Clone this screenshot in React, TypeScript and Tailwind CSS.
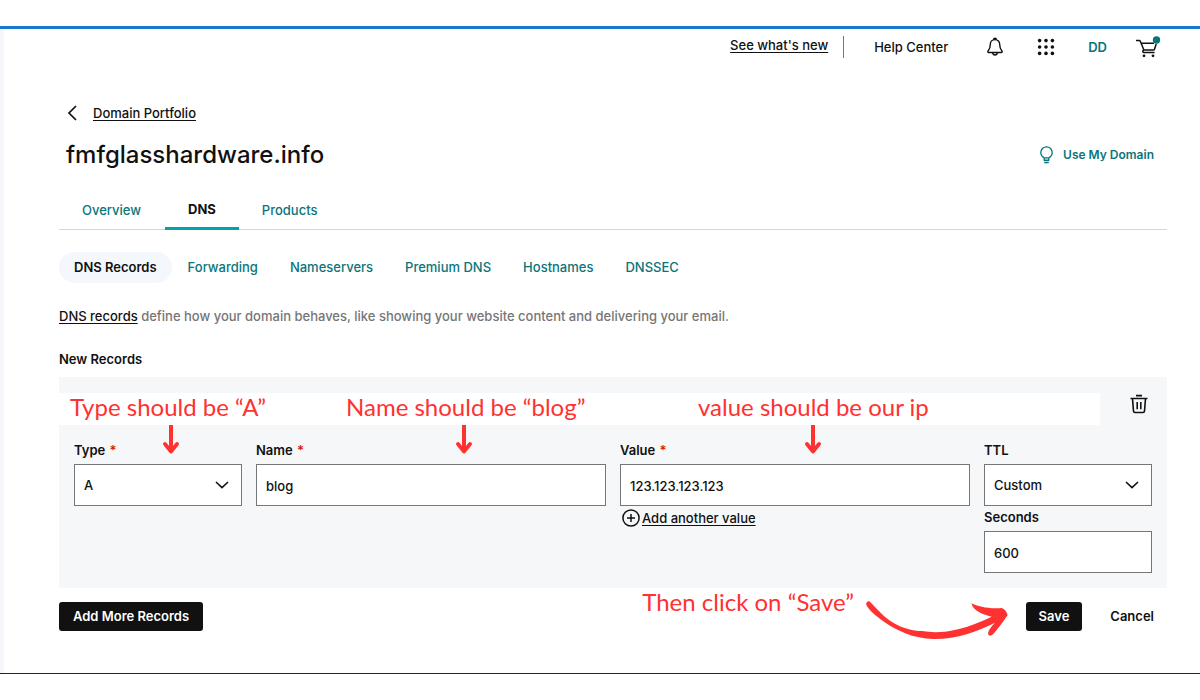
import type { ReactNode } from "react";

const subTabs = ["Forwarding", "Nameservers", "Premium DNS", "Hostnames", "DNSSEC"];

function Label({ htmlFor, required, children }: { htmlFor: string; required?: boolean; children: ReactNode }) {
  return (
    <label htmlFor={htmlFor} className="mb-1 block text-[13px] leading-5 font-semibold">
      {children}
      {required && <span className="ml-px font-semibold text-[#db1802]"> *</span>}
    </label>
  );
}

function TextField({ id, value }: { id: string; value: string }) {
  return (
    <input
      id={id}
      defaultValue={value}
      className="block h-[42px] w-full border border-[#767676] bg-white px-[9px] pt-[2px] text-[13px] font-medium"
    />
  );
}

function SelectField({ id, options }: { id: string; options: string[] }) {
  return (
    <div className="relative">
      <select
        id={id}
        className="block h-[42px] w-full appearance-none border border-[#767676] bg-white px-[9px] pt-[2px] text-[13px] font-medium"
      >
        {options.map((o) => (
          <option key={o}>{o}</option>
        ))}
      </select>
      <svg
        viewBox="0 0 14 8"
        className="pointer-events-none absolute top-[17px] right-[13px] h-2 w-3.5"
        fill="none"
        stroke="#111"
        strokeWidth="1.6"
      >
        <path d="M1 1l6 5.6L13 1" />
      </svg>
    </div>
  );
}

function DownArrow({ className }: { className: string }) {
  return (
    <svg
      viewBox="0 0 16 30"
      className={`absolute top-12 h-[30px] w-4 ${className}`}
      fill="none"
      stroke="#ff3131"
      strokeWidth="4"
      strokeLinejoin="round"
    >
      <path d="M8 0v26" />
      <path d="M2 19l6 7.500 6-7.500" strokeLinecap="round" strokeWidth="3.8" />
    </svg>
  );
}

function Note({ className, children }: { className?: string; children: ReactNode }) {
  return (
    <span className={`font-['Lato',sans-serif] text-2xl leading-8 whitespace-nowrap text-[#ff3131] ${className ?? ""}`}>
      {children}
    </span>
  );
}

function BellIcon() {
  return (
    <svg viewBox="0 0 16 20" className="h-5 w-4" fill="none" stroke="#111" strokeWidth="1.4" strokeLinejoin="round">
      <path d="M8 2.600c-2.900 0-4.700 2.200-4.700 4.800 0 3.600-.6 4.700-2.200 6.600-.5.700-.2 1.500.6 1.500h12.600c.8 0 1.100-.8.6-1.500-1.600-1.900-2.200-3-2.200-6.600 0-2.600-1.800-4.800-4.700-4.800z" />
      <path d="M6.600 2.700c0-2 2.800-2 2.800 0M5.600 15.700c.5 3 4.300 3 4.800 0" />
    </svg>
  );
}

function GridIcon() {
  return (
    <svg viewBox="0 0 18 18" className="h-[18px] w-[18px]" fill="#111">
      {[2.6, 9, 15.4].map((y) => [2.6, 9, 15.4].map((x) => <circle key={`${x}-${y}`} cx={x} cy={y} r="1.8" />))}
    </svg>
  );
}

function CartIcon() {
  return (
    <svg viewBox="0 0 25 22" className="h-[22px] w-[25px]" fill="none" stroke="#111" strokeWidth="1.5">
      <path d="M0 4.500h3.200c.6 0 .9.300 1.100.8l3.200 7.700c.3.800.7 1.100 1.400 1.100h8.300c.8 0 1.200-.4 1.400-1.100l1.600-5" />
      <path d="M5 7.200h13M8 13.700c-1.600.7-1.800 2.900.4 2.900h10.200" />
      <circle cx="8" cy="19.800" r="1.400" fill="#111" stroke="none" />
      <circle cx="17" cy="19.800" r="1.400" fill="#111" stroke="none" />
      <circle cx="20.500" cy="4" r="3.700" fill="#09757a" stroke="none" />
    </svg>
  );
}

function TrashIcon() {
  return (
    <svg viewBox="0 0 18 20" className="h-5 w-[18px]" fill="none" stroke="#111" strokeWidth="1.6">
      <path d="M6 1.600h6M.5 4.500h17M2.500 4.500l1 12.700c.1.900.7 1.300 1.400 1.300h8.200c.7 0 1.300-.4 1.400-1.300l1-12.700" />
      <path d="M7.200 8v7.200M10.800 8v7.200" />
    </svg>
  );
}

export default function App() {
  return (
    <div className="bg-white pt-[26px] font-['Inter',sans-serif] text-[#111]">
      <div className="flex border-t-3 border-b border-t-[#1976d2] border-b-[#26261f]">
        <div className="w-1 shrink-0 bg-[#f5f7fa]" />
        <div className="min-w-0 flex-1 pr-[33px] pb-[42px] pl-[55px]">
          <header className="flex h-9 items-center justify-end pr-[6px] text-[13px] font-medium">
            <a href="#new" className="mb-[2px] underline underline-offset-2">
              See what's new
            </a>
            <span className="ml-[15px] h-[22px] w-px bg-[#767676]" />
            <a href="#help" className="ml-[30px] pt-[2px]">
              Help Center
            </a>
            <button aria-label="Notifications" className="ml-[39px]">
              <BellIcon />
            </button>
            <button aria-label="Apps" className="ml-[34px]">
              <GridIcon />
            </button>
            <button className="ml-[33px] pt-[2px] font-semibold text-[#09757a]">DD</button>
            <button aria-label="Cart" className="ml-[29px]">
              <CartIcon />
            </button>
          </header>

          <nav aria-label="Breadcrumb" className="mt-[38px] flex items-center pl-2 text-[13px] leading-5 font-medium">
            <svg viewBox="0 0 10 16" className="h-4 w-2.5" fill="none" stroke="#111" strokeWidth="1.7">
              <path d="M9 1L2 8l7 7" />
            </svg>
            <a href="#portfolio" className="ml-4 underline underline-offset-2">
              Domain Portfolio
            </a>
          </nav>

          <div className="mt-4 flex items-center justify-between pr-[13px] pl-[7px]">
            <h1 className="text-2xl leading-8 font-medium">fmfglasshardware.info</h1>
            <a href="#use" className="flex items-center gap-[10px] text-[12px] font-semibold text-[#09757a]">
              <svg viewBox="0 0 13 18" className="h-[18px] w-[13px]" fill="none" stroke="#09757a" strokeWidth="1.3">
                <path d="M4.200 11.800C2.200 10.800.8 9 .8 6.600a5.700 5.700 0 0111.400 0c0 2.400-1.400 4.200-3.400 5.200v2.400H4.200zM4 14.300h5M4.200 16.500h4.600M4.200 11.900h4.600" />
              </svg>
              Use My Domain
            </a>
          </div>

          <nav className="mt-[19px] flex h-10 border-b border-[#d6d6d6] pl-[23px] text-[13px] font-medium">
            <a href="#overview" className="flex items-center pt-[2px] text-[#09757a]">
              Overview
            </a>
            <a
              href="#dns"
              className="-mb-px ml-6 flex items-center border-b-3 border-[#00a4a6] px-[23px] pt-[2px] font-bold"
            >
              DNS
            </a>
            <a href="#products" className="ml-[23px] flex items-center pt-[2px] text-[#09757a]">
              Products
            </a>
          </nav>

          <nav className="mt-[22px] flex items-center gap-8 text-[13px] leading-[31px] font-medium text-[#09757a]">
            <a href="#records" className="-mr-4 rounded-full bg-[#f4f8fc] px-[15px] font-semibold text-[#111]">
              DNS Records
            </a>
            {subTabs.map((t) => (
              <a key={t} href="#tab">
                {t}
              </a>
            ))}
          </nav>

          <p className="mt-[23px] text-[13px] leading-5 font-medium text-[#767676]">
            <a href="#about" className="text-[#111] underline underline-offset-2">
              DNS records
            </a>{" "}
            define how your domain behaves, like showing your website content and delivering your email.
          </p>

          <h2 className="mt-[23px] text-[13px] leading-5 font-semibold">New Records</h2>

          <section className="relative mt-2 bg-[#f5f7f9] pt-4 pb-[15px]">
            <div className="flex items-start">
              <div className="h-8 flex-1 bg-white" />
              <button aria-label="Delete record" className="mr-[19px] ml-[30px] pt-px">
                <TrashIcon />
              </button>
            </div>
            <div className="mt-[15px] grid grid-cols-[168fr_350fr_350fr_168fr] gap-[14px] px-[15px]">
              <div>
                <Label htmlFor="type" required>
                  Type
                </Label>
                <SelectField id="type" options={["A", "CNAME", "TXT"]} />
              </div>
              <div>
                <Label htmlFor="name" required>
                  Name
                </Label>
                <TextField id="name" value="blog" />
              </div>
              <div>
                <Label htmlFor="value" required>
                  Value
                </Label>
                <TextField id="value" value="123.123.123.123" />
                <button className="mt-[2px] ml-[2px] flex items-center gap-[2px] text-[13px] leading-5 font-medium">
                  <svg viewBox="0 0 18 18" className="h-[18px] w-[18px]" fill="none" stroke="#111" strokeWidth="1.5">
                    <circle cx="9" cy="9" r="8.1" />
                    <path d="M9 5v8M5 9h8" />
                  </svg>
                  <span className="underline underline-offset-2">Add another value</span>
                </button>
              </div>
              <div>
                <Label htmlFor="ttl">TTL</Label>
                <SelectField id="ttl" options={["Custom", "1 Hour"]} />
                <div className="mt-px">
                  <Label htmlFor="seconds">Seconds</Label>
                  <TextField id="seconds" value="600" />
                </div>
              </div>
            </div>
            <Note className="absolute top-[14px] left-[11px]">Type should be “A”</Note>
            <Note className="absolute top-[14px] left-[287px]">Name should be “blog”</Note>
            <Note className="absolute top-[14px] left-[639px]">value should be our ip</Note>
            <DownArrow className="left-[104px]" />
            <DownArrow className="left-[397px]" />
            <DownArrow className="left-[746px]" />
          </section>

          <div className="relative mt-[14px] flex items-center pr-[13px] text-[13px] leading-[29px] font-semibold">
            <button className="rounded-[3px] bg-[#111] px-[14px] text-white">Add More Records</button>
            <button className="ml-auto rounded-[3px] bg-[#111] px-[13px] text-white">Save</button>
            <button className="ml-7">Cancel</button>
            <div className="absolute -top-4 right-[157px] flex items-start gap-3 font-normal">
              <Note>Then click on “Save”</Note>
              <svg viewBox="738 60 432 120" className="mt-[14px] h-10 w-36" fill="#ff3131">
                <path d="M738 72Q740 62 748 64C775 90 785 105 810 122C850 150 890 152 905 153C960 162 1020 155 1115 110C1095 106 1060 95 1054 70C1075 80 1110 88 1145 84Q1158 88 1163 105C1150 125 1135 145 1120 162Q1108 172 1104 162C1105 150 1115 138 1125 128C1070 155 1010 178 940 177C880 176 830 152 790 124C765 105 745 90 738 72Z" />
              </svg>
            </div>
          </div>
        </div>
      </div>
    </div>
  );
}
